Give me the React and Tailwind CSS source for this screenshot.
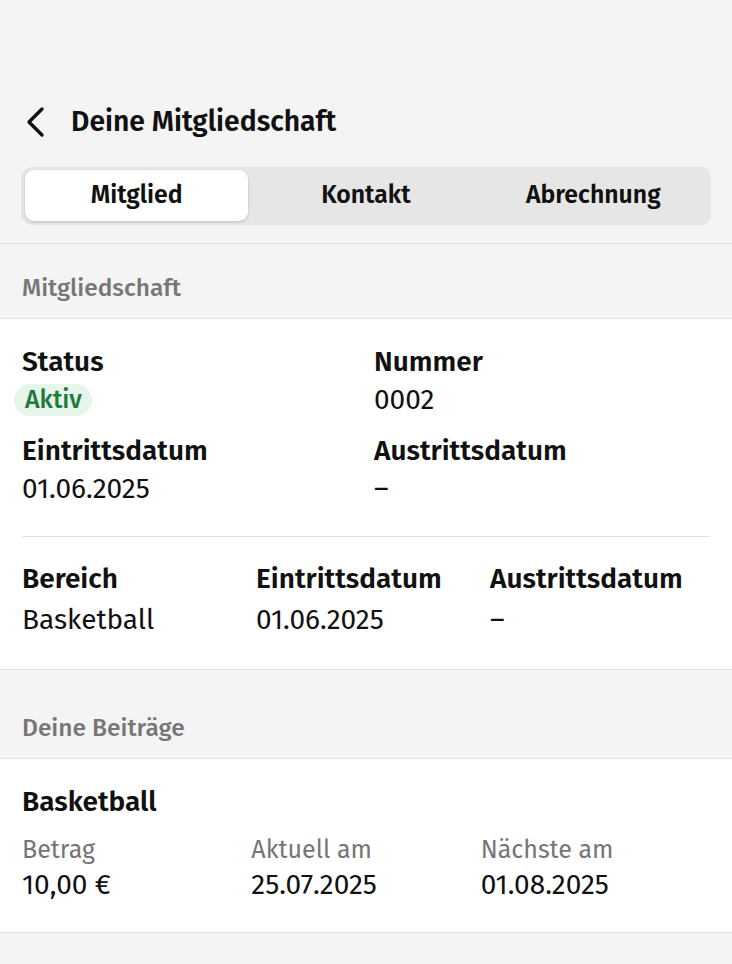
import { useState } from 'react'

const font = { fontFamily: '"Fira Sans", Roboto, "Noto Sans", sans-serif' }

function Field({ label, children, gap }) {
  return (
    <div className="flex flex-col">
      <span className="text-[28px] leading-[38px] text-[#111] font-semibold">{label}</span>
      <div className={`text-[28px] leading-[38px] text-[#111] flex items-center ${gap ? 'h-[41px] items-end' : 'h-[38px]'}`}>{children}</div>
    </div>
  )
}

function SectionHeader({ title, top }) {
  return (
    <div className={`px-[22px] ${top} pb-[16px] border-b border-[#e2e2e2]`}>
      <h3 className="text-[24.5px] leading-[28px] font-medium text-[#777]">{title}</h3>
    </div>
  )
}

export default function App() {
  const [tab, setTab] = useState('Mitglied')
  const tabs = ['Mitglied', 'Kontakt', 'Abrechnung']

  return (
    <div className="min-h-screen bg-[#f4f4f4] antialiased" style={font}>
      {/* Header */}
      <div className="px-[21px] pt-[100px] pb-[18px] border-b border-[#e2e2e2]">
        <div className="flex items-center h-[44px] gap-[20px]">
          <button className="w-[30px] h-[44px] flex items-center justify-center">
            <svg width="22" height="32" viewBox="0 0 22 32" fill="none">
              <path d="M17 3 L4 16 L17 29" stroke="#111" strokeWidth="3.4" strokeLinecap="round" strokeLinejoin="round" />
            </svg>
          </button>
          <h1 className="text-[28.3px] font-semibold text-[#111]">Deine Mitgliedschaft</h1>
        </div>

        <div className="mt-[23px] bg-[#e6e6e6] rounded-[10px] pt-[3px] pb-[4px] px-[4px] grid grid-cols-3">
          {tabs.map(t => (
            <button key={t} onClick={() => setTab(t)}
              className={`h-[51px] rounded-[9px] text-[24.8px] font-semibold text-[#111] ${tab === t ? 'bg-white shadow-[0_1px_3px_rgba(0,0,0,0.18)] mr-[4px]' : ''}`}>
              {t}
            </button>
          ))}
        </div>
      </div>

      <SectionHeader title="Mitgliedschaft" top="pt-[30px]" />

      <div className="bg-white px-[22px] pt-[24px] pb-[30px] border-b border-[#e2e2e2]">
        <div className="grid grid-cols-2 gap-x-[16px] gap-y-[13px]">
          <Field label="Status">
            <span className="ml-[-8px] h-[32px] pl-[11px] pr-[10px] rounded-full bg-[#e7f6eb] text-[#1f7a3c] text-[25px] font-medium flex items-center">Aktiv</span>
          </Field>
          <Field label="Nummer">0002</Field>
          <Field label="Eintrittsdatum">01.06.2025</Field>
          <Field label="Austrittsdatum">–</Field>
        </div>

        <div className="mt-[28px] border-t border-[#e2e2e2] pt-[23px] grid grid-cols-3 gap-x-[14px]">
          <Field label="Bereich" gap>Basketball</Field>
          <Field label="Eintrittsdatum" gap>01.06.2025</Field>
          <Field label="Austrittsdatum" gap>–</Field>
        </div>
      </div>

      <SectionHeader title="Deine Beiträge" top="pt-[44px]" />

      <div className="bg-white px-[22px] pt-[24px] pb-[29px] border-b border-[#e2e2e2]">
        <h4 className="text-[28px] leading-[38px] font-semibold text-[#111]">Basketball</h4>
        <div className="mt-[12px] grid grid-cols-3">
          {[
            ['Betrag', '10,00 €'],
            ['Aktuell am', '25.07.2025'],
            ['Nächste am', '01.08.2025'],
          ].map(([l, v]) => (
            <div key={l} className="flex flex-col">
              <span className="text-[25px] leading-[34px] text-[#757575]">{l}</span>
              <span className="text-[28px] leading-[36px] text-[#111]">{v}</span>
            </div>
          ))}
        </div>
      </div>
    </div>
  )
}
